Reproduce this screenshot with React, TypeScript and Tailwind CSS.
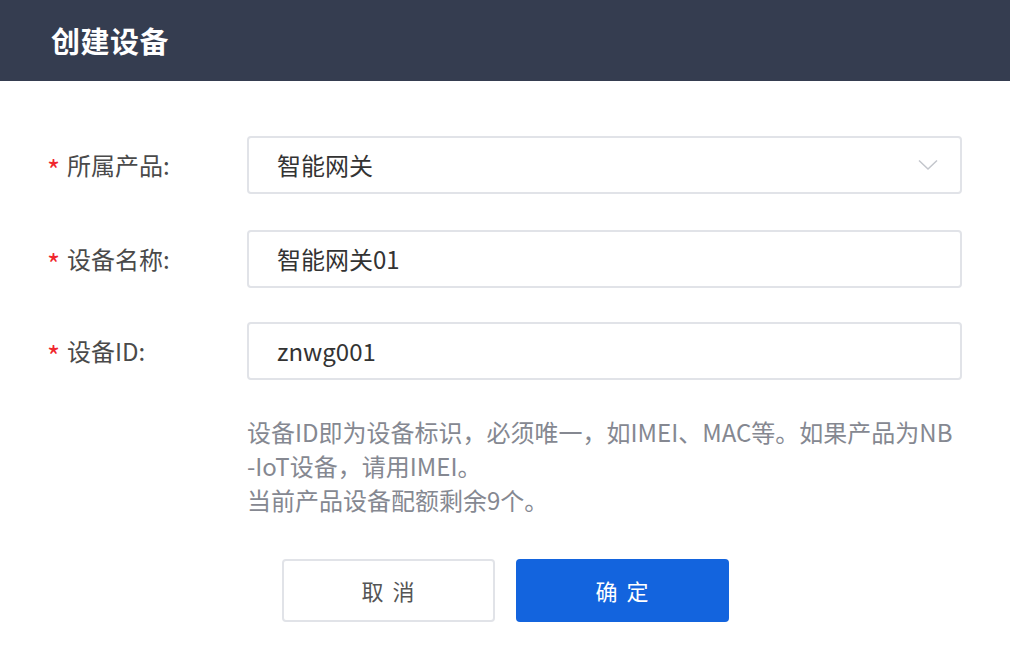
import React from "react";

const font = { fontFamily: '"Noto Sans CJK SC", "Noto Sans", sans-serif' };

function Label({ text }: { text: string }) {
  return (
    <div className="w-[200px] flex items-center text-[24px] text-[#4a4a4a]">
      <span className="text-[#f0262d] text-[28px] w-[20px] leading-none mt-[8px]">*</span>
      <span>{text}</span>
    </div>
  );
}

export default function App() {
  return (
    <div className="w-[1010px] h-[666px] bg-white overflow-hidden" style={font}>
      <div className="h-[81px] bg-[#353d50] flex items-center pl-[51px]">
        <h1 className="text-white text-[29px] font-bold tracking-[0.5px]">创建设备</h1>
      </div>
      <div className="pt-[55px] pl-[47px] pr-[48px] flex flex-col">
        <div className="flex items-center h-[58px]">
          <Label text="所属产品:" />
          <div className="flex-1 h-full border-2 border-[#e1e3e8] rounded-[4px] flex items-center pl-[28px] pr-[22px] text-[24px] text-[#333]">
            <span className="flex-1">智能网关</span>
            <svg width="20" height="12" viewBox="0 0 20 12" fill="none">
              <path d="M1 1.5 L10 10 L19 1.5" stroke="#c3c6cc" strokeWidth="1.5" />
            </svg>
          </div>
        </div>
        <div className="flex items-center h-[58px] mt-[36px]">
          <Label text="设备名称:" />
          <div className="flex-1 h-full border-2 border-[#e1e3e8] rounded-[4px] flex items-center pl-[28px] text-[24px] text-[#333]">
            智能网关01
          </div>
        </div>
        <div className="flex items-center h-[58px] mt-[34px]">
          <Label text="设备ID:" />
          <div className="flex-1 h-full border-2 border-[#e1e3e8] rounded-[4px] flex items-center pl-[28px] text-[24px] text-[#333]">
            znwg001
          </div>
        </div>
        <div className="ml-[200px] mt-[35px] text-[24px] leading-[34px] text-[#858891] whitespace-nowrap">
          <div>设备ID即为设备标识，必须唯一，如IMEI、MAC等。如果产品为NB</div>
          <div>-IoT设备，请用IMEI。</div>
          <div>当前产品设备配额剩余9个。</div>
        </div>
      </div>
      <div className="flex justify-center gap-[21px] mt-[42px]">
        <button className="w-[213px] h-[63px] border-2 border-[#e1e3e8] rounded-[4px] bg-white text-[#555] text-[22px] tracking-[9px] pl-[9px]">
          取消
        </button>
        <button className="w-[213px] h-[63px] rounded-[4px] bg-[#1364de] text-white text-[22px] tracking-[9px] pl-[9px]">
          确定
        </button>
      </div>
    </div>
  );
}
